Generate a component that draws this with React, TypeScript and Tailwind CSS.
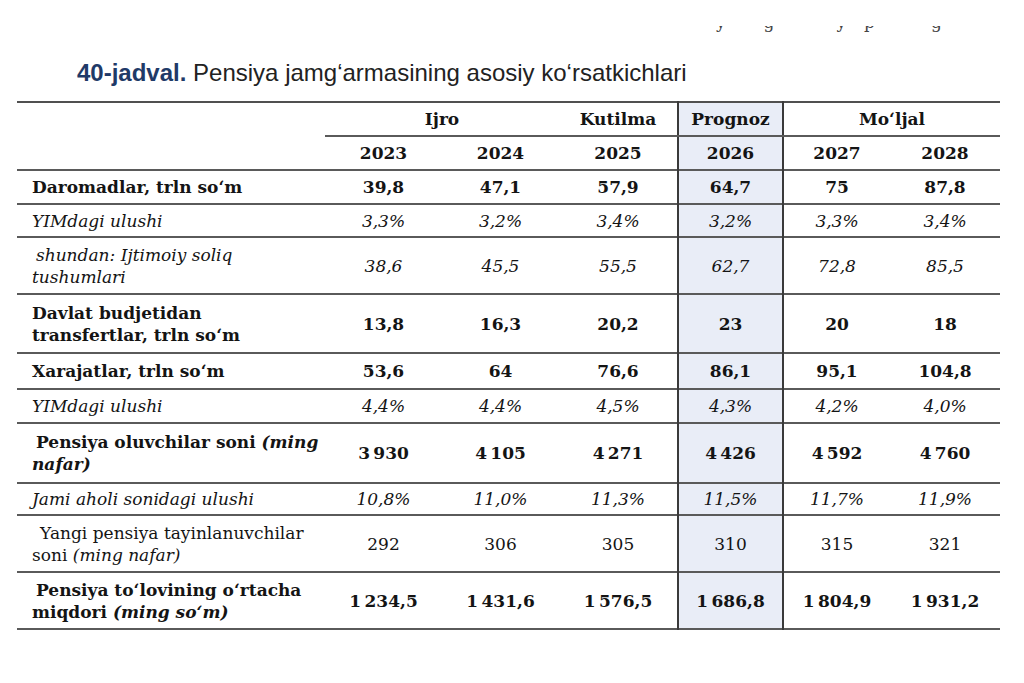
import React from 'react'

type Row = {
  label: React.ReactNode
  values: string[]
  style: 'bold' | 'italic' | 'normal'
  h: string
}

const sp = '\u2009'

const rows: Row[] = [
  { label: 'Daromadlar, trln so‘m', values: ['39,8', '47,1', '57,9', '64,7', '75', '87,8'], style: 'bold', h: 'h-[34px]' },
  { label: 'YIMdagi ulushi', values: ['3,3%', '3,2%', '3,4%', '3,2%', '3,3%', '3,4%'], style: 'italic', h: 'h-[33px]' },
  {
    label: (
      <>
        <span className="pl-[4px]">shundan: Ijtimoiy soliq</span>
        <br />
        tushumlari
      </>
    ),
    values: ['38,6', '45,5', '55,5', '62,7', '72,8', '85,5'],
    style: 'italic',
    h: 'h-[57px]',
  },
  {
    label: (
      <>
        Davlat budjetidan
        <br />
        transfertlar, trln so‘m
      </>
    ),
    values: ['13,8', '16,3', '20,2', '23', '20', '18'],
    style: 'bold',
    h: 'h-[59px]',
  },
  { label: 'Xarajatlar, trln so‘m', values: ['53,6', '64', '76,6', '86,1', '95,1', '104,8'], style: 'bold', h: 'h-[36px]' },
  { label: 'YIMdagi ulushi', values: ['4,4%', '4,4%', '4,5%', '4,3%', '4,2%', '4,0%'], style: 'italic', h: 'h-[34px]' },
  {
    label: (
      <>
        <span className="pl-[4px]">
          Pensiya oluvchilar soni <i>(ming</i>
        </span>
        <br />
        <i>nafar)</i>
      </>
    ),
    values: [`3${sp}930`, `4${sp}105`, `4${sp}271`, `4${sp}426`, `4${sp}592`, `4${sp}760`],
    style: 'bold',
    h: 'h-[60px]',
  },
  { label: 'Jami aholi sonidagi ulushi', values: ['10,8%', '11,0%', '11,3%', '11,5%', '11,7%', '11,9%'], style: 'italic', h: 'h-[32px]' },
  {
    label: (
      <>
        <span className="pl-[8px]">Yangi pensiya tayinlanuvchilar</span>
        <br />
        soni <i>(ming nafar)</i>
      </>
    ),
    values: ['292', '306', '305', '310', '315', '321'],
    style: 'normal',
    h: 'h-[57px]',
  },
  {
    label: (
      <>
        <span className="pl-[4px]">Pensiya to‘lovining o‘rtacha</span>
        <br />
        miqdori <i>(ming so‘m)</i>
      </>
    ),
    values: [`1${sp}234,5`, `1${sp}431,6`, `1${sp}576,5`, `1${sp}686,8`, `1${sp}804,9`, `1${sp}931,2`],
    style: 'bold',
    h: 'h-[57px]',
  },
]

const styleCls = {
  bold: 'font-bold',
  italic: 'italic',
  normal: 'font-normal',
}

export default function App() {
  return (
    <div className="w-[1024px] h-[683px] bg-white overflow-hidden font-['DejaVu_Serif',serif] text-[#141414]">
      {/* tail of the previous line, cut off by the crop */}
      <div className="pt-[26px]">
        <div className="h-[11px] overflow-hidden text-[17px] leading-[17px] text-[#444]">
          <div className="-mt-[12px] flex pl-[716px]">
            <span>y</span>
            <span className="ml-[38px]">g</span>
            <span className="ml-[62px]">y</span>
            <span className="ml-[18px]">p</span>
            <span className="ml-[56px]">g</span>
          </div>
        </div>
      </div>

      <h1 className="mt-[22px] pl-[77px] text-[24px] leading-[28px] font-['Liberation_Sans',sans-serif] text-[#222]">
        <span className="font-bold text-[#1f3a68]">40-jadval.</span> Pensiya jamg‘armasining asosiy ko‘rsatkichlari
      </h1>

      <table className="mt-[14px] ml-[17px] w-[983px] border-collapse table-fixed text-[17px] leading-[22px]">
        <colgroup>
          <col className="w-[308px]" />
          <col className="w-[117px]" />
          <col className="w-[117px]" />
          <col className="w-[119px]" />
          <col className="w-[105px]" />
          <col className="w-[107px]" />
          <col className="w-[110px]" />
        </colgroup>
        <thead>
          <tr className="h-[34px] border-t-2 border-[#505050] font-bold">
            <th rowSpan={2} className="border-b-2 border-[#5a5a5a]" />
            <th colSpan={2} className="border-b-2 border-[#5a5a5a] text-center align-middle">Ijro</th>
            <th className="border-b-2 border-[#5a5a5a] text-center align-middle">Kutilma</th>
            <th className="border-b-2 border-x-2 border-[#3a3a3a] border-b-[#5a5a5a] bg-[#e9edf7] text-center align-middle">Prognoz</th>
            <th colSpan={2} className="border-b-2 border-[#5a5a5a] text-center align-middle">Mo‘ljal</th>
          </tr>
          <tr className="h-[34px] border-b-2 border-[#5a5a5a] font-bold">
            <th className="text-center">2023</th>
            <th className="text-center">2024</th>
            <th className="text-center">2025</th>
            <th className="border-x-2 border-[#3a3a3a] bg-[#e9edf7] text-center">2026</th>
            <th className="text-center">2027</th>
            <th className="text-center">2028</th>
          </tr>
        </thead>
        <tbody>
          {rows.map((r, i) => (
            <tr key={i} className={`${r.h} border-b-2 border-[#5a5a5a] ${styleCls[r.style]}`}>
              <td className="pl-[15px] text-left align-middle whitespace-nowrap">{r.label}</td>
              {r.values.map((v, j) => (
                <td
                  key={j}
                  className={
                    j === 3
                      ? 'border-x-2 border-[#3a3a3a] bg-[#e9edf7] text-center align-middle whitespace-nowrap'
                      : 'text-center align-middle whitespace-nowrap'
                  }
                >
                  {v}
                </td>
              ))}
            </tr>
          ))}
        </tbody>
      </table>
    </div>
  )
}
